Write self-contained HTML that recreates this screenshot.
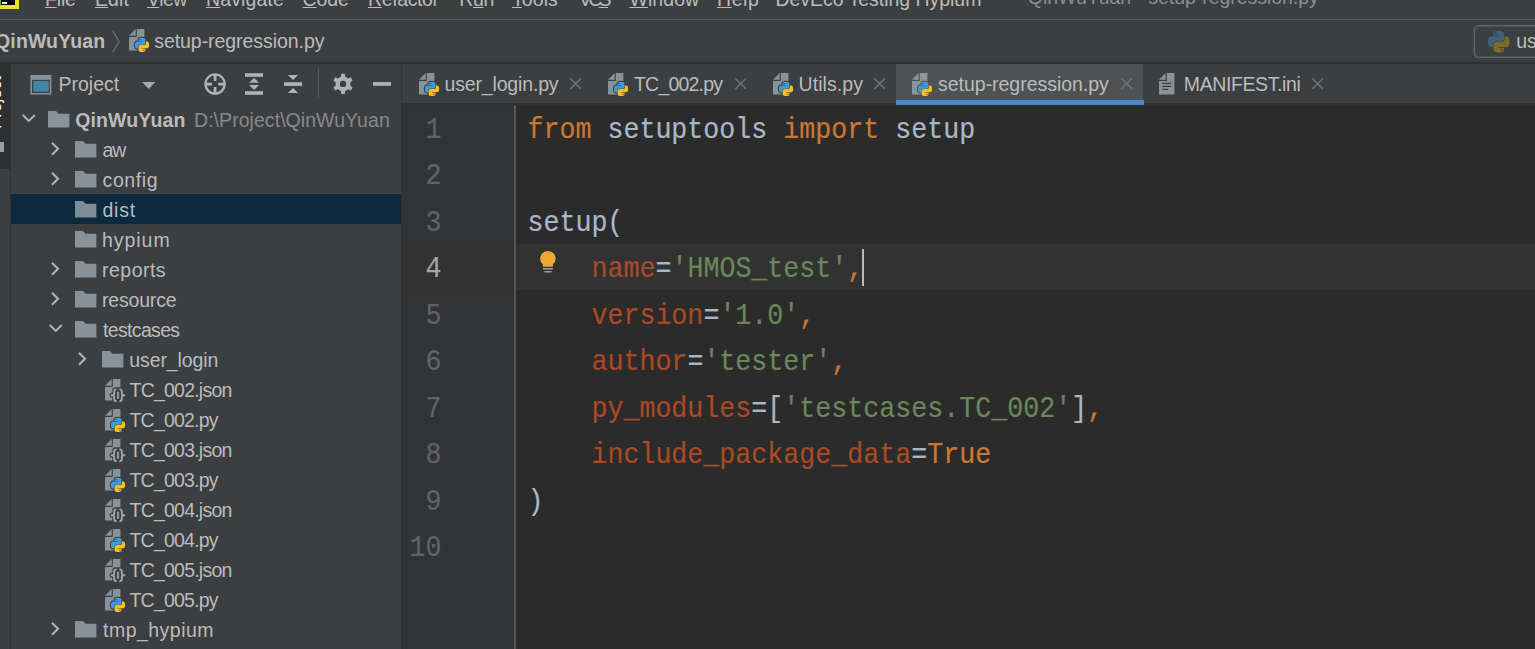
<!DOCTYPE html>
<html><head><meta charset="utf-8"><title>IDE</title><style>
html,body{margin:0;padding:0;background:#3c3f41;}
html{overflow:hidden;width:1535px;height:649px;}
body{width:1535px;height:649px;overflow:hidden;position:relative;font-family:"Liberation Sans",sans-serif;}
.t{position:absolute;white-space:pre;font-family:"Liberation Sans",sans-serif;font-size:19.5px;line-height:normal;}
.u{text-decoration:underline;text-decoration-thickness:1px;text-underline-offset:1px;}
.code{position:absolute;left:527.4px;white-space:pre;font-family:"Liberation Mono",monospace;font-size:26.67px;line-height:46.33px;height:46.33px;transform:scaleY(1.08);transform-origin:0 30.27px;-webkit-text-stroke:0.2px;}
.ln{position:absolute;left:402px;width:39.6px;text-align:right;white-space:pre;font-family:"Liberation Mono",monospace;font-size:26.67px;line-height:46.33px;height:46.33px;transform:scaleY(1.10);transform-origin:0 30.27px;-webkit-text-stroke:0.2px;}
</style></head><body>
<div style="position:absolute;left:0;top:0;width:1535px;height:649px;overflow:hidden">
<div style="position:absolute;left:0;top:0;width:1535px;height:649px;background:#3c3f41"></div>
<div style="position:absolute;left:0;top:19px;width:1535px;height:1px;background:#555759"></div>
<div style="position:absolute;left:0;top:62px;width:1535px;height:2px;background:#2d2f30"></div>
<div style="position:absolute;left:-3px;top:-10px;width:14px;height:11px;background:#050a02;border:4px solid #e9e733;border-left-color:#63ab21;border-bottom-color:#f0e22f;box-sizing:content-box"></div>
<div style="position:absolute;left:2px;top:2px;width:5.4px;height:1.9px;background:#e4e4e4"></div>
<div style="position:absolute;left:0;top:64px;width:10px;height:105px;background:#2d2f30"></div>
<div style="position:absolute;left:10px;top:64px;width:1px;height:585px;background:#2f3133"></div>
<div style="position:absolute;left:0;top:142px;width:4px;height:10px;background:#9a9da0"></div>
<div style="position:absolute;left:-14.3px;top:64px;width:24.3px;height:76px;overflow:hidden"><div style="position:absolute;left:0;top:64.5px;transform-origin:0 0;transform:rotate(-90deg);font:17px 'Liberation Sans',sans-serif;color:#ffffff;white-space:pre">Project</div></div>
<div style="position:absolute;left:401px;top:64px;width:1px;height:585px;background:#323232"></div>
<div style="position:absolute;left:402px;top:64px;width:1133px;height:39px;background:#3c3f41"></div>
<div style="position:absolute;left:402px;top:103px;width:1133px;height:2px;background:#313131"></div>
<div style="position:absolute;left:896px;top:64px;width:247.3px;height:39px;background:#4e5254"></div>
<div style="position:absolute;left:896px;top:100px;width:248px;height:5px;background:#4a88c7"></div>
<div style="position:absolute;left:402px;top:105px;width:1133px;height:544px;background:#2b2b2b"></div>
<div style="position:absolute;left:402px;top:105px;width:113px;height:544px;background:#313335"></div>
<div style="position:absolute;left:896px;top:100px;width:248px;height:5px;background:#4a88c7"></div>
<div style="position:absolute;left:514px;top:105px;width:2px;height:544px;background:#555555"></div>
<div style="position:absolute;left:402px;top:244px;width:112px;height:46px;background:#323232"></div>
<div style="position:absolute;left:516px;top:244px;width:1019px;height:46px;background:#323232"></div>
<div style="position:absolute;left:862px;top:249px;width:2px;height:37px;background:#bbbbbb"></div>
<div style="position:absolute;left:11px;top:194px;width:390px;height:30px;background:#0d293e"></div>
<svg style="position:absolute;left:112px;top:30px;overflow:visible" width="8" height="23" viewBox="0 0 8 23"><path d="M0.6 0.5 L7 11.5 L0.6 22.5" fill="none" stroke="#717476" stroke-width="1.2"/></svg>
<svg style="position:absolute;left:129.2px;top:29.0px;overflow:visible" width="24" height="24" viewBox="0 0 24 24"><path fill="#9AA7B0" fill-opacity=".8" d="M6.7 0 L0 6.7 H6.7z"/><path fill="#9AA7B0" fill-opacity=".8" d="M7.8 0 H15.4 V21.4 H0 V7.9 H7.8z"/><g transform="translate(5.9 8.8) scale(0.5916666666666667)" opacity="1"><path fill="#3c3f41" stroke="#3c3f41" stroke-width="3.38" stroke-linejoin="round" paint-order="stroke" d="M14.25.18l.9.2.73.26.59.3.45.32.34.34.25.34.16.33.1.3.04.26.02.2-.01.13V8.5l-.05.63-.13.55-.21.46-.26.38-.3.31-.33.25-.35.19-.35.14-.33.1-.3.07-.26.04-.21.02H8.77l-.69.05-.59.14-.5.22-.41.27-.33.32-.27.35-.2.36-.15.37-.1.35-.07.32-.04.27-.02.21v3.06H3.17l-.21-.03-.28-.07-.32-.12-.35-.18-.36-.26-.36-.36-.35-.46-.32-.59-.28-.73-.21-.88-.14-1.05-.05-1.23.06-1.22.16-1.04.24-.87.32-.71.36-.57.4-.44.42-.33.42-.24.4-.16.36-.1.32-.05.24-.01h.16l.06.01h8.16v-.83H6.18l-.01-2.75-.02-.37.05-.34.11-.31.17-.28.25-.26.31-.23.38-.2.44-.18.51-.15.58-.12.64-.1.71-.06.77-.04.84-.02 1.27.05zM7.95 2.16l-.23.33-.08.41.08.41.23.34.33.22.41.09.41-.09.33-.22.23-.34.08-.41-.08-.41-.23-.33-.33-.22-.41-.09-.41.09z"/><path fill="#3c3f41" stroke="#3c3f41" stroke-width="3.38" stroke-linejoin="round" paint-order="stroke" d="M21.04 6.11l.28.06.32.12.35.18.36.27.36.35.35.47.32.59.28.73.21.88.14 1.04.05 1.23-.06 1.23-.16 1.04-.24.86-.32.71-.36.57-.4.45-.42.33-.42.24-.4.16-.36.09-.32.05-.24.02-.16-.01h-8.22v.82h5.84l.01 2.76.02.36-.05.34-.11.31-.17.29-.25.25-.31.24-.38.2-.44.17-.51.15-.58.13-.64.09-.71.07-.77.04-.84.01-1.27-.04-1.07-.14-.9-.2-.73-.25-.59-.3-.45-.33-.34-.34-.25-.34-.16-.33-.1-.3-.04-.25-.02-.2.01-.13v-5.34l.05-.64.13-.54.21-.46.26-.38.3-.32.33-.24.35-.2.35-.14.33-.1.3-.06.26-.04.21-.02.13-.01h5.84l.69-.05.59-.14.5-.21.41-.28.33-.32.27-.35.2-.36.15-.36.1-.35.07-.32.04-.28.02-.21V6.07h2.09l.14.01zM14.57 20.36l-.23.33-.08.41.08.41.23.33.33.23.41.08.41-.08.33-.23.23-.33.08-.41-.08-.41-.23-.33-.33-.23-.41-.08-.41.08z"/><path fill="#3d9bd5" fill-rule="evenodd" d="M14.25.18l.9.2.73.26.59.3.45.32.34.34.25.34.16.33.1.3.04.26.02.2-.01.13V8.5l-.05.63-.13.55-.21.46-.26.38-.3.31-.33.25-.35.19-.35.14-.33.1-.3.07-.26.04-.21.02H8.77l-.69.05-.59.14-.5.22-.41.27-.33.32-.27.35-.2.36-.15.37-.1.35-.07.32-.04.27-.02.21v3.06H3.17l-.21-.03-.28-.07-.32-.12-.35-.18-.36-.26-.36-.36-.35-.46-.32-.59-.28-.73-.21-.88-.14-1.05-.05-1.23.06-1.22.16-1.04.24-.87.32-.71.36-.57.4-.44.42-.33.42-.24.4-.16.36-.1.32-.05.24-.01h.16l.06.01h8.16v-.83H6.18l-.01-2.75-.02-.37.05-.34.11-.31.17-.28.25-.26.31-.23.38-.2.44-.18.51-.15.58-.12.64-.1.71-.06.77-.04.84-.02 1.27.05zM7.95 2.16l-.23.33-.08.41.08.41.23.34.33.22.41.09.41-.09.33-.22.23-.34.08-.41-.08-.41-.23-.33-.33-.22-.41-.09-.41.09z"/><path fill="#f5c211" fill-rule="evenodd" d="M21.04 6.11l.28.06.32.12.35.18.36.27.36.35.35.47.32.59.28.73.21.88.14 1.04.05 1.23-.06 1.23-.16 1.04-.24.86-.32.71-.36.57-.4.45-.42.33-.42.24-.4.16-.36.09-.32.05-.24.02-.16-.01h-8.22v.82h5.84l.01 2.76.02.36-.05.34-.11.31-.17.29-.25.25-.31.24-.38.2-.44.17-.51.15-.58.13-.64.09-.71.07-.77.04-.84.01-1.27-.04-1.07-.14-.9-.2-.73-.25-.59-.3-.45-.33-.34-.34-.25-.34-.16-.33-.1-.3-.04-.25-.02-.2.01-.13v-5.34l.05-.64.13-.54.21-.46.26-.38.3-.32.33-.24.35-.2.35-.14.33-.1.3-.06.26-.04.21-.02.13-.01h5.84l.69-.05.59-.14.5-.21.41-.28.33-.32.27-.35.2-.36.15-.36.1-.35.07-.32.04-.28.02-.21V6.07h2.09l.14.01zM14.57 20.36l-.23.33-.08.41.08.41.23.33.33.23.41.08.41-.08.33-.23.23-.33.08-.41-.08-.41-.23-.33-.33-.23-.41-.08-.41.08z"/></g></svg>
<svg style="position:absolute;left:1470px;top:20px;overflow:visible" width="70" height="42" viewBox="0 0 70 42"><rect x="4.4" y="5.7" width="80" height="31.5" rx="4.5" fill="none" stroke="#606365" stroke-width="1.5"/></svg>
<svg style="position:absolute;left:1488px;top:31px;overflow:visible" width="22" height="22" viewBox="0 0 22 22"><g transform="translate(0 0) scale(0.8958333333333334)" opacity="1"><path fill="#3d6279" fill-rule="evenodd" d="M14.25.18l.9.2.73.26.59.3.45.32.34.34.25.34.16.33.1.3.04.26.02.2-.01.13V8.5l-.05.63-.13.55-.21.46-.26.38-.3.31-.33.25-.35.19-.35.14-.33.1-.3.07-.26.04-.21.02H8.77l-.69.05-.59.14-.5.22-.41.27-.33.32-.27.35-.2.36-.15.37-.1.35-.07.32-.04.27-.02.21v3.06H3.17l-.21-.03-.28-.07-.32-.12-.35-.18-.36-.26-.36-.36-.35-.46-.32-.59-.28-.73-.21-.88-.14-1.05-.05-1.23.06-1.22.16-1.04.24-.87.32-.71.36-.57.4-.44.42-.33.42-.24.4-.16.36-.1.32-.05.24-.01h.16l.06.01h8.16v-.83H6.18l-.01-2.75-.02-.37.05-.34.11-.31.17-.28.25-.26.31-.23.38-.2.44-.18.51-.15.58-.12.64-.1.71-.06.77-.04.84-.02 1.27.05zM7.95 2.16l-.23.33-.08.41.08.41.23.34.33.22.41.09.41-.09.33-.22.23-.34.08-.41-.08-.41-.23-.33-.33-.22-.41-.09-.41.09z"/><path fill="#7f6b28" fill-rule="evenodd" d="M21.04 6.11l.28.06.32.12.35.18.36.27.36.35.35.47.32.59.28.73.21.88.14 1.04.05 1.23-.06 1.23-.16 1.04-.24.86-.32.71-.36.57-.4.45-.42.33-.42.24-.4.16-.36.09-.32.05-.24.02-.16-.01h-8.22v.82h5.84l.01 2.76.02.36-.05.34-.11.31-.17.29-.25.25-.31.24-.38.2-.44.17-.51.15-.58.13-.64.09-.71.07-.77.04-.84.01-1.27-.04-1.07-.14-.9-.2-.73-.25-.59-.3-.45-.33-.34-.34-.25-.34-.16-.33-.1-.3-.04-.25-.02-.2.01-.13v-5.34l.05-.64.13-.54.21-.46.26-.38.3-.32.33-.24.35-.2.35-.14.33-.1.3-.06.26-.04.21-.02.13-.01h5.84l.69-.05.59-.14.5-.21.41-.28.33-.32.27-.35.2-.36.15-.36.1-.35.07-.32.04-.28.02-.21V6.07h2.09l.14.01zM14.57 20.36l-.23.33-.08.41.08.41.23.33.33.23.41.08.41-.08.33-.23.23-.33.08-.41-.08-.41-.23-.33-.33-.23-.41-.08-.41.08z"/></g></svg>
<svg style="position:absolute;left:30px;top:75px;overflow:visible" width="22" height="20" viewBox="0 0 22 20"><path fill="#9AA7B0" fill-opacity=".8" fill-rule="evenodd" d="M0.4 0 H21.4 V19.6 H0.4z M2 4.8 V18 H19.8 V4.8z"/><rect x="3.3" y="5.9" width="15.4" height="10.8" fill="#3e88a8"/></svg>
<svg style="position:absolute;left:142px;top:82px;overflow:visible" width="14" height="8" viewBox="0 0 14 8"><path d="M0 0 H13.4 L6.7 7z" fill="#a6a9ab"/></svg>
<svg style="position:absolute;left:0;top:0" width="1535" height="649" viewBox="0 0 1535 649"><g fill="none" stroke="#afb1b3"><circle cx="215.1" cy="84.05" r="9.6" stroke-width="2.3"/><path stroke-width="2.8" d="M215.1 74.5 V81 M215.1 87.1 V93.6 M205.5 84.05 H212 M218.2 84.05 H224.7"/></g><g fill="#afb1b3"><rect x="245" y="73.2" width="18" height="3.6"/><rect x="245" y="91.2" width="18" height="3.6"/><path d="M249 82.8 H259.1 L254.05 78z"/><path d="M249 85.1 H259.1 L254.05 90z"/><rect x="284" y="82.2" width="18.1" height="3.7"/><path d="M287.9 75 H298.2 L293.05 80z"/><path d="M287.9 93 H298.2 L293.05 87.9z"/><path fill-rule="evenodd" d="M340.85 76.82 L341.25 73.85 L344.75 73.85 L345.15 76.82 A7.4 7.4 0 0 1 348.06 78.50 L350.83 77.36 L352.58 80.39 L350.21 82.22 A7.4 7.4 0 0 1 350.21 85.58 L352.58 87.41 L350.83 90.44 L348.06 89.30 A7.4 7.4 0 0 1 345.15 90.98 L344.75 93.95 L341.25 93.95 L340.85 90.98 A7.4 7.4 0 0 1 337.94 89.30 L335.17 90.44 L333.42 87.41 L335.79 85.58 A7.4 7.4 0 0 1 335.79 82.22 L333.42 80.39 L335.17 77.36 L337.94 78.50 A7.4 7.4 0 0 1 340.85 76.82z M339.8 83.9 a3.2 3.2 0 1 0 6.4 0 a3.2 3.2 0 1 0 -6.4 0z"/><rect x="373" y="82.1" width="18" height="3.7"/></g></svg>
<div style="position:absolute;left:318px;top:68px;width:1px;height:30px;background:#55585a"></div>
<svg style="position:absolute;left:419.2px;top:73px;overflow:visible" width="24" height="24" viewBox="0 0 24 24"><path fill="#9AA7B0" fill-opacity=".8" d="M6.7 0 L0 6.7 H6.7z"/><path fill="#9AA7B0" fill-opacity=".8" d="M7.8 0 H15.4 V21.4 H0 V7.9 H7.8z"/><g transform="translate(5.9 8.8) scale(0.5916666666666667)" opacity="1"><path fill="#3c3f41" stroke="#3c3f41" stroke-width="3.38" stroke-linejoin="round" paint-order="stroke" d="M14.25.18l.9.2.73.26.59.3.45.32.34.34.25.34.16.33.1.3.04.26.02.2-.01.13V8.5l-.05.63-.13.55-.21.46-.26.38-.3.31-.33.25-.35.19-.35.14-.33.1-.3.07-.26.04-.21.02H8.77l-.69.05-.59.14-.5.22-.41.27-.33.32-.27.35-.2.36-.15.37-.1.35-.07.32-.04.27-.02.21v3.06H3.17l-.21-.03-.28-.07-.32-.12-.35-.18-.36-.26-.36-.36-.35-.46-.32-.59-.28-.73-.21-.88-.14-1.05-.05-1.23.06-1.22.16-1.04.24-.87.32-.71.36-.57.4-.44.42-.33.42-.24.4-.16.36-.1.32-.05.24-.01h.16l.06.01h8.16v-.83H6.18l-.01-2.75-.02-.37.05-.34.11-.31.17-.28.25-.26.31-.23.38-.2.44-.18.51-.15.58-.12.64-.1.71-.06.77-.04.84-.02 1.27.05zM7.95 2.16l-.23.33-.08.41.08.41.23.34.33.22.41.09.41-.09.33-.22.23-.34.08-.41-.08-.41-.23-.33-.33-.22-.41-.09-.41.09z"/><path fill="#3c3f41" stroke="#3c3f41" stroke-width="3.38" stroke-linejoin="round" paint-order="stroke" d="M21.04 6.11l.28.06.32.12.35.18.36.27.36.35.35.47.32.59.28.73.21.88.14 1.04.05 1.23-.06 1.23-.16 1.04-.24.86-.32.71-.36.57-.4.45-.42.33-.42.24-.4.16-.36.09-.32.05-.24.02-.16-.01h-8.22v.82h5.84l.01 2.76.02.36-.05.34-.11.31-.17.29-.25.25-.31.24-.38.2-.44.17-.51.15-.58.13-.64.09-.71.07-.77.04-.84.01-1.27-.04-1.07-.14-.9-.2-.73-.25-.59-.3-.45-.33-.34-.34-.25-.34-.16-.33-.1-.3-.04-.25-.02-.2.01-.13v-5.34l.05-.64.13-.54.21-.46.26-.38.3-.32.33-.24.35-.2.35-.14.33-.1.3-.06.26-.04.21-.02.13-.01h5.84l.69-.05.59-.14.5-.21.41-.28.33-.32.27-.35.2-.36.15-.36.1-.35.07-.32.04-.28.02-.21V6.07h2.09l.14.01zM14.57 20.36l-.23.33-.08.41.08.41.23.33.33.23.41.08.41-.08.33-.23.23-.33.08-.41-.08-.41-.23-.33-.33-.23-.41-.08-.41.08z"/><path fill="#3d9bd5" fill-rule="evenodd" d="M14.25.18l.9.2.73.26.59.3.45.32.34.34.25.34.16.33.1.3.04.26.02.2-.01.13V8.5l-.05.63-.13.55-.21.46-.26.38-.3.31-.33.25-.35.19-.35.14-.33.1-.3.07-.26.04-.21.02H8.77l-.69.05-.59.14-.5.22-.41.27-.33.32-.27.35-.2.36-.15.37-.1.35-.07.32-.04.27-.02.21v3.06H3.17l-.21-.03-.28-.07-.32-.12-.35-.18-.36-.26-.36-.36-.35-.46-.32-.59-.28-.73-.21-.88-.14-1.05-.05-1.23.06-1.22.16-1.04.24-.87.32-.71.36-.57.4-.44.42-.33.42-.24.4-.16.36-.1.32-.05.24-.01h.16l.06.01h8.16v-.83H6.18l-.01-2.75-.02-.37.05-.34.11-.31.17-.28.25-.26.31-.23.38-.2.44-.18.51-.15.58-.12.64-.1.71-.06.77-.04.84-.02 1.27.05zM7.95 2.16l-.23.33-.08.41.08.41.23.34.33.22.41.09.41-.09.33-.22.23-.34.08-.41-.08-.41-.23-.33-.33-.22-.41-.09-.41.09z"/><path fill="#f5c211" fill-rule="evenodd" d="M21.04 6.11l.28.06.32.12.35.18.36.27.36.35.35.47.32.59.28.73.21.88.14 1.04.05 1.23-.06 1.23-.16 1.04-.24.86-.32.71-.36.57-.4.45-.42.33-.42.24-.4.16-.36.09-.32.05-.24.02-.16-.01h-8.22v.82h5.84l.01 2.76.02.36-.05.34-.11.31-.17.29-.25.25-.31.24-.38.2-.44.17-.51.15-.58.13-.64.09-.71.07-.77.04-.84.01-1.27-.04-1.07-.14-.9-.2-.73-.25-.59-.3-.45-.33-.34-.34-.25-.34-.16-.33-.1-.3-.04-.25-.02-.2.01-.13v-5.34l.05-.64.13-.54.21-.46.26-.38.3-.32.33-.24.35-.2.35-.14.33-.1.3-.06.26-.04.21-.02.13-.01h5.84l.69-.05.59-.14.5-.21.41-.28.33-.32.27-.35.2-.36.15-.36.1-.35.07-.32.04-.28.02-.21V6.07h2.09l.14.01zM14.57 20.36l-.23.33-.08.41.08.41.23.33.33.23.41.08.41-.08.33-.23.23-.33.08-.41-.08-.41-.23-.33-.33-.23-.41-.08-.41.08z"/></g></svg>
<svg style="position:absolute;left:569.5px;top:78.3px;overflow:visible" width="12" height="12" viewBox="0 0 12 12"><path d="M0.5 0.5 L10.9 10.9 M10.9 0.5 L0.5 10.9" fill="none" stroke="#6e7173" stroke-width="1.5"/></svg>
<svg style="position:absolute;left:608px;top:73px;overflow:visible" width="24" height="24" viewBox="0 0 24 24"><path fill="#9AA7B0" fill-opacity=".8" d="M6.7 0 L0 6.7 H6.7z"/><path fill="#9AA7B0" fill-opacity=".8" d="M7.8 0 H15.4 V21.4 H0 V7.9 H7.8z"/><g transform="translate(5.9 8.8) scale(0.5916666666666667)" opacity="1"><path fill="#3c3f41" stroke="#3c3f41" stroke-width="3.38" stroke-linejoin="round" paint-order="stroke" d="M14.25.18l.9.2.73.26.59.3.45.32.34.34.25.34.16.33.1.3.04.26.02.2-.01.13V8.5l-.05.63-.13.55-.21.46-.26.38-.3.31-.33.25-.35.19-.35.14-.33.1-.3.07-.26.04-.21.02H8.77l-.69.05-.59.14-.5.22-.41.27-.33.32-.27.35-.2.36-.15.37-.1.35-.07.32-.04.27-.02.21v3.06H3.17l-.21-.03-.28-.07-.32-.12-.35-.18-.36-.26-.36-.36-.35-.46-.32-.59-.28-.73-.21-.88-.14-1.05-.05-1.23.06-1.22.16-1.04.24-.87.32-.71.36-.57.4-.44.42-.33.42-.24.4-.16.36-.1.32-.05.24-.01h.16l.06.01h8.16v-.83H6.18l-.01-2.75-.02-.37.05-.34.11-.31.17-.28.25-.26.31-.23.38-.2.44-.18.51-.15.58-.12.64-.1.71-.06.77-.04.84-.02 1.27.05zM7.95 2.16l-.23.33-.08.41.08.41.23.34.33.22.41.09.41-.09.33-.22.23-.34.08-.41-.08-.41-.23-.33-.33-.22-.41-.09-.41.09z"/><path fill="#3c3f41" stroke="#3c3f41" stroke-width="3.38" stroke-linejoin="round" paint-order="stroke" d="M21.04 6.11l.28.06.32.12.35.18.36.27.36.35.35.47.32.59.28.73.21.88.14 1.04.05 1.23-.06 1.23-.16 1.04-.24.86-.32.71-.36.57-.4.45-.42.33-.42.24-.4.16-.36.09-.32.05-.24.02-.16-.01h-8.22v.82h5.84l.01 2.76.02.36-.05.34-.11.31-.17.29-.25.25-.31.24-.38.2-.44.17-.51.15-.58.13-.64.09-.71.07-.77.04-.84.01-1.27-.04-1.07-.14-.9-.2-.73-.25-.59-.3-.45-.33-.34-.34-.25-.34-.16-.33-.1-.3-.04-.25-.02-.2.01-.13v-5.34l.05-.64.13-.54.21-.46.26-.38.3-.32.33-.24.35-.2.35-.14.33-.1.3-.06.26-.04.21-.02.13-.01h5.84l.69-.05.59-.14.5-.21.41-.28.33-.32.27-.35.2-.36.15-.36.1-.35.07-.32.04-.28.02-.21V6.07h2.09l.14.01zM14.57 20.36l-.23.33-.08.41.08.41.23.33.33.23.41.08.41-.08.33-.23.23-.33.08-.41-.08-.41-.23-.33-.33-.23-.41-.08-.41.08z"/><path fill="#3d9bd5" fill-rule="evenodd" d="M14.25.18l.9.2.73.26.59.3.45.32.34.34.25.34.16.33.1.3.04.26.02.2-.01.13V8.5l-.05.63-.13.55-.21.46-.26.38-.3.31-.33.25-.35.19-.35.14-.33.1-.3.07-.26.04-.21.02H8.77l-.69.05-.59.14-.5.22-.41.27-.33.32-.27.35-.2.36-.15.37-.1.35-.07.32-.04.27-.02.21v3.06H3.17l-.21-.03-.28-.07-.32-.12-.35-.18-.36-.26-.36-.36-.35-.46-.32-.59-.28-.73-.21-.88-.14-1.05-.05-1.23.06-1.22.16-1.04.24-.87.32-.71.36-.57.4-.44.42-.33.42-.24.4-.16.36-.1.32-.05.24-.01h.16l.06.01h8.16v-.83H6.18l-.01-2.75-.02-.37.05-.34.11-.31.17-.28.25-.26.31-.23.38-.2.44-.18.51-.15.58-.12.64-.1.71-.06.77-.04.84-.02 1.27.05zM7.95 2.16l-.23.33-.08.41.08.41.23.34.33.22.41.09.41-.09.33-.22.23-.34.08-.41-.08-.41-.23-.33-.33-.22-.41-.09-.41.09z"/><path fill="#f5c211" fill-rule="evenodd" d="M21.04 6.11l.28.06.32.12.35.18.36.27.36.35.35.47.32.59.28.73.21.88.14 1.04.05 1.23-.06 1.23-.16 1.04-.24.86-.32.71-.36.57-.4.45-.42.33-.42.24-.4.16-.36.09-.32.05-.24.02-.16-.01h-8.22v.82h5.84l.01 2.76.02.36-.05.34-.11.31-.17.29-.25.25-.31.24-.38.2-.44.17-.51.15-.58.13-.64.09-.71.07-.77.04-.84.01-1.27-.04-1.07-.14-.9-.2-.73-.25-.59-.3-.45-.33-.34-.34-.25-.34-.16-.33-.1-.3-.04-.25-.02-.2.01-.13v-5.34l.05-.64.13-.54.21-.46.26-.38.3-.32.33-.24.35-.2.35-.14.33-.1.3-.06.26-.04.21-.02.13-.01h5.84l.69-.05.59-.14.5-.21.41-.28.33-.32.27-.35.2-.36.15-.36.1-.35.07-.32.04-.28.02-.21V6.07h2.09l.14.01zM14.57 20.36l-.23.33-.08.41.08.41.23.33.33.23.41.08.41-.08.33-.23.23-.33.08-.41-.08-.41-.23-.33-.33-.23-.41-.08-.41.08z"/></g></svg>
<svg style="position:absolute;left:734.5px;top:78.3px;overflow:visible" width="12" height="12" viewBox="0 0 12 12"><path d="M0.5 0.5 L10.9 10.9 M10.9 0.5 L0.5 10.9" fill="none" stroke="#6e7173" stroke-width="1.5"/></svg>
<svg style="position:absolute;left:773.2px;top:73px;overflow:visible" width="24" height="24" viewBox="0 0 24 24"><path fill="#9AA7B0" fill-opacity=".8" d="M6.7 0 L0 6.7 H6.7z"/><path fill="#9AA7B0" fill-opacity=".8" d="M7.8 0 H15.4 V21.4 H0 V7.9 H7.8z"/><g transform="translate(5.9 8.8) scale(0.5916666666666667)" opacity="1"><path fill="#3c3f41" stroke="#3c3f41" stroke-width="3.38" stroke-linejoin="round" paint-order="stroke" d="M14.25.18l.9.2.73.26.59.3.45.32.34.34.25.34.16.33.1.3.04.26.02.2-.01.13V8.5l-.05.63-.13.55-.21.46-.26.38-.3.31-.33.25-.35.19-.35.14-.33.1-.3.07-.26.04-.21.02H8.77l-.69.05-.59.14-.5.22-.41.27-.33.32-.27.35-.2.36-.15.37-.1.35-.07.32-.04.27-.02.21v3.06H3.17l-.21-.03-.28-.07-.32-.12-.35-.18-.36-.26-.36-.36-.35-.46-.32-.59-.28-.73-.21-.88-.14-1.05-.05-1.23.06-1.22.16-1.04.24-.87.32-.71.36-.57.4-.44.42-.33.42-.24.4-.16.36-.1.32-.05.24-.01h.16l.06.01h8.16v-.83H6.18l-.01-2.75-.02-.37.05-.34.11-.31.17-.28.25-.26.31-.23.38-.2.44-.18.51-.15.58-.12.64-.1.71-.06.77-.04.84-.02 1.27.05zM7.95 2.16l-.23.33-.08.41.08.41.23.34.33.22.41.09.41-.09.33-.22.23-.34.08-.41-.08-.41-.23-.33-.33-.22-.41-.09-.41.09z"/><path fill="#3c3f41" stroke="#3c3f41" stroke-width="3.38" stroke-linejoin="round" paint-order="stroke" d="M21.04 6.11l.28.06.32.12.35.18.36.27.36.35.35.47.32.59.28.73.21.88.14 1.04.05 1.23-.06 1.23-.16 1.04-.24.86-.32.71-.36.57-.4.45-.42.33-.42.24-.4.16-.36.09-.32.05-.24.02-.16-.01h-8.22v.82h5.84l.01 2.76.02.36-.05.34-.11.31-.17.29-.25.25-.31.24-.38.2-.44.17-.51.15-.58.13-.64.09-.71.07-.77.04-.84.01-1.27-.04-1.07-.14-.9-.2-.73-.25-.59-.3-.45-.33-.34-.34-.25-.34-.16-.33-.1-.3-.04-.25-.02-.2.01-.13v-5.34l.05-.64.13-.54.21-.46.26-.38.3-.32.33-.24.35-.2.35-.14.33-.1.3-.06.26-.04.21-.02.13-.01h5.84l.69-.05.59-.14.5-.21.41-.28.33-.32.27-.35.2-.36.15-.36.1-.35.07-.32.04-.28.02-.21V6.07h2.09l.14.01zM14.57 20.36l-.23.33-.08.41.08.41.23.33.33.23.41.08.41-.08.33-.23.23-.33.08-.41-.08-.41-.23-.33-.33-.23-.41-.08-.41.08z"/><path fill="#3d9bd5" fill-rule="evenodd" d="M14.25.18l.9.2.73.26.59.3.45.32.34.34.25.34.16.33.1.3.04.26.02.2-.01.13V8.5l-.05.63-.13.55-.21.46-.26.38-.3.31-.33.25-.35.19-.35.14-.33.1-.3.07-.26.04-.21.02H8.77l-.69.05-.59.14-.5.22-.41.27-.33.32-.27.35-.2.36-.15.37-.1.35-.07.32-.04.27-.02.21v3.06H3.17l-.21-.03-.28-.07-.32-.12-.35-.18-.36-.26-.36-.36-.35-.46-.32-.59-.28-.73-.21-.88-.14-1.05-.05-1.23.06-1.22.16-1.04.24-.87.32-.71.36-.57.4-.44.42-.33.42-.24.4-.16.36-.1.32-.05.24-.01h.16l.06.01h8.16v-.83H6.18l-.01-2.75-.02-.37.05-.34.11-.31.17-.28.25-.26.31-.23.38-.2.44-.18.51-.15.58-.12.64-.1.71-.06.77-.04.84-.02 1.27.05zM7.95 2.16l-.23.33-.08.41.08.41.23.34.33.22.41.09.41-.09.33-.22.23-.34.08-.41-.08-.41-.23-.33-.33-.22-.41-.09-.41.09z"/><path fill="#f5c211" fill-rule="evenodd" d="M21.04 6.11l.28.06.32.12.35.18.36.27.36.35.35.47.32.59.28.73.21.88.14 1.04.05 1.23-.06 1.23-.16 1.04-.24.86-.32.71-.36.57-.4.45-.42.33-.42.24-.4.16-.36.09-.32.05-.24.02-.16-.01h-8.22v.82h5.84l.01 2.76.02.36-.05.34-.11.31-.17.29-.25.25-.31.24-.38.2-.44.17-.51.15-.58.13-.64.09-.71.07-.77.04-.84.01-1.27-.04-1.07-.14-.9-.2-.73-.25-.59-.3-.45-.33-.34-.34-.25-.34-.16-.33-.1-.3-.04-.25-.02-.2.01-.13v-5.34l.05-.64.13-.54.21-.46.26-.38.3-.32.33-.24.35-.2.35-.14.33-.1.3-.06.26-.04.21-.02.13-.01h5.84l.69-.05.59-.14.5-.21.41-.28.33-.32.27-.35.2-.36.15-.36.1-.35.07-.32.04-.28.02-.21V6.07h2.09l.14.01zM14.57 20.36l-.23.33-.08.41.08.41.23.33.33.23.41.08.41-.08.33-.23.23-.33.08-.41-.08-.41-.23-.33-.33-.23-.41-.08-.41.08z"/></g></svg>
<svg style="position:absolute;left:874.4px;top:78.3px;overflow:visible" width="12" height="12" viewBox="0 0 12 12"><path d="M0.5 0.5 L10.9 10.9 M10.9 0.5 L0.5 10.9" fill="none" stroke="#6e7173" stroke-width="1.5"/></svg>
<svg style="position:absolute;left:912.2px;top:73px;overflow:visible" width="24" height="24" viewBox="0 0 24 24"><path fill="#9AA7B0" fill-opacity=".8" d="M6.7 0 L0 6.7 H6.7z"/><path fill="#9AA7B0" fill-opacity=".8" d="M7.8 0 H15.4 V21.4 H0 V7.9 H7.8z"/><g transform="translate(5.9 8.8) scale(0.5916666666666667)" opacity="1"><path fill="#4e5254" stroke="#4e5254" stroke-width="3.38" stroke-linejoin="round" paint-order="stroke" d="M14.25.18l.9.2.73.26.59.3.45.32.34.34.25.34.16.33.1.3.04.26.02.2-.01.13V8.5l-.05.63-.13.55-.21.46-.26.38-.3.31-.33.25-.35.19-.35.14-.33.1-.3.07-.26.04-.21.02H8.77l-.69.05-.59.14-.5.22-.41.27-.33.32-.27.35-.2.36-.15.37-.1.35-.07.32-.04.27-.02.21v3.06H3.17l-.21-.03-.28-.07-.32-.12-.35-.18-.36-.26-.36-.36-.35-.46-.32-.59-.28-.73-.21-.88-.14-1.05-.05-1.23.06-1.22.16-1.04.24-.87.32-.71.36-.57.4-.44.42-.33.42-.24.4-.16.36-.1.32-.05.24-.01h.16l.06.01h8.16v-.83H6.18l-.01-2.75-.02-.37.05-.34.11-.31.17-.28.25-.26.31-.23.38-.2.44-.18.51-.15.58-.12.64-.1.71-.06.77-.04.84-.02 1.27.05zM7.95 2.16l-.23.33-.08.41.08.41.23.34.33.22.41.09.41-.09.33-.22.23-.34.08-.41-.08-.41-.23-.33-.33-.22-.41-.09-.41.09z"/><path fill="#4e5254" stroke="#4e5254" stroke-width="3.38" stroke-linejoin="round" paint-order="stroke" d="M21.04 6.11l.28.06.32.12.35.18.36.27.36.35.35.47.32.59.28.73.21.88.14 1.04.05 1.23-.06 1.23-.16 1.04-.24.86-.32.71-.36.57-.4.45-.42.33-.42.24-.4.16-.36.09-.32.05-.24.02-.16-.01h-8.22v.82h5.84l.01 2.76.02.36-.05.34-.11.31-.17.29-.25.25-.31.24-.38.2-.44.17-.51.15-.58.13-.64.09-.71.07-.77.04-.84.01-1.27-.04-1.07-.14-.9-.2-.73-.25-.59-.3-.45-.33-.34-.34-.25-.34-.16-.33-.1-.3-.04-.25-.02-.2.01-.13v-5.34l.05-.64.13-.54.21-.46.26-.38.3-.32.33-.24.35-.2.35-.14.33-.1.3-.06.26-.04.21-.02.13-.01h5.84l.69-.05.59-.14.5-.21.41-.28.33-.32.27-.35.2-.36.15-.36.1-.35.07-.32.04-.28.02-.21V6.07h2.09l.14.01zM14.57 20.36l-.23.33-.08.41.08.41.23.33.33.23.41.08.41-.08.33-.23.23-.33.08-.41-.08-.41-.23-.33-.33-.23-.41-.08-.41.08z"/><path fill="#3d9bd5" fill-rule="evenodd" d="M14.25.18l.9.2.73.26.59.3.45.32.34.34.25.34.16.33.1.3.04.26.02.2-.01.13V8.5l-.05.63-.13.55-.21.46-.26.38-.3.31-.33.25-.35.19-.35.14-.33.1-.3.07-.26.04-.21.02H8.77l-.69.05-.59.14-.5.22-.41.27-.33.32-.27.35-.2.36-.15.37-.1.35-.07.32-.04.27-.02.21v3.06H3.17l-.21-.03-.28-.07-.32-.12-.35-.18-.36-.26-.36-.36-.35-.46-.32-.59-.28-.73-.21-.88-.14-1.05-.05-1.23.06-1.22.16-1.04.24-.87.32-.71.36-.57.4-.44.42-.33.42-.24.4-.16.36-.1.32-.05.24-.01h.16l.06.01h8.16v-.83H6.18l-.01-2.75-.02-.37.05-.34.11-.31.17-.28.25-.26.31-.23.38-.2.44-.18.51-.15.58-.12.64-.1.71-.06.77-.04.84-.02 1.27.05zM7.95 2.16l-.23.33-.08.41.08.41.23.34.33.22.41.09.41-.09.33-.22.23-.34.08-.41-.08-.41-.23-.33-.33-.22-.41-.09-.41.09z"/><path fill="#f5c211" fill-rule="evenodd" d="M21.04 6.11l.28.06.32.12.35.18.36.27.36.35.35.47.32.59.28.73.21.88.14 1.04.05 1.23-.06 1.23-.16 1.04-.24.86-.32.71-.36.57-.4.45-.42.33-.42.24-.4.16-.36.09-.32.05-.24.02-.16-.01h-8.22v.82h5.84l.01 2.76.02.36-.05.34-.11.31-.17.29-.25.25-.31.24-.38.2-.44.17-.51.15-.58.13-.64.09-.71.07-.77.04-.84.01-1.27-.04-1.07-.14-.9-.2-.73-.25-.59-.3-.45-.33-.34-.34-.25-.34-.16-.33-.1-.3-.04-.25-.02-.2.01-.13v-5.34l.05-.64.13-.54.21-.46.26-.38.3-.32.33-.24.35-.2.35-.14.33-.1.3-.06.26-.04.21-.02.13-.01h5.84l.69-.05.59-.14.5-.21.41-.28.33-.32.27-.35.2-.36.15-.36.1-.35.07-.32.04-.28.02-.21V6.07h2.09l.14.01zM14.57 20.36l-.23.33-.08.41.08.41.23.33.33.23.41.08.41-.08.33-.23.23-.33.08-.41-.08-.41-.23-.33-.33-.23-.41-.08-.41.08z"/></g></svg>
<svg style="position:absolute;left:1120.5px;top:78.3px;overflow:visible" width="12" height="12" viewBox="0 0 12 12"><path d="M0.5 0.5 L10.9 10.9 M10.9 0.5 L0.5 10.9" fill="none" stroke="#6e7173" stroke-width="1.5"/></svg>
<svg style="position:absolute;left:1158.7px;top:73px;overflow:visible" width="24" height="24" viewBox="0 0 24 24"><path fill="#9AA7B0" fill-opacity=".8" d="M6.7 0 L0 6.7 H6.7z"/><path fill="#9AA7B0" fill-opacity=".8" fill-rule="evenodd" d="M7.8 0 H15.4 V21.4 H0 V7.9 H7.8z M3.3 9.7 V11 H12.2 V9.7z M3.3 12.7 V14 H12.2 V12.7z M3.3 15.7 V17 H9.3 V15.7z"/></svg>
<svg style="position:absolute;left:1312.2px;top:78.3px;overflow:visible" width="12" height="12" viewBox="0 0 12 12"><path d="M0.5 0.5 L10.9 10.9 M10.9 0.5 L0.5 10.9" fill="none" stroke="#6e7173" stroke-width="1.5"/></svg>
<svg style="position:absolute;left:48.1px;top:110.9px;overflow:visible" width="24" height="24" viewBox="0 0 24 24"><path fill="#9AA7B0" fill-opacity=".8" d="M0 0 H7.3 Q8 0 8.5 .5 L10.6 2.7 H21.4 V16.6 H0z"/></svg>
<svg style="position:absolute;left:21.5px;top:113.6px;overflow:visible" width="14" height="10" viewBox="0 0 14 10"><path d="M0.8 1 L6.8 7 L12.8 1" fill="none" stroke="#b2b4b6" stroke-width="1.9"/></svg>
<svg style="position:absolute;left:75.1px;top:140.9px;overflow:visible" width="24" height="24" viewBox="0 0 24 24"><path fill="#9AA7B0" fill-opacity=".8" d="M0 0 H7.3 Q8 0 8.5 .5 L10.6 2.7 H21.4 V16.6 H0z"/></svg>
<svg style="position:absolute;left:50.89999999999999px;top:142.3px;overflow:visible" width="10" height="14" viewBox="0 0 10 14"><path d="M1 0.8 L7 6.8 L1 12.8" fill="none" stroke="#b2b4b6" stroke-width="2.05"/></svg>
<svg style="position:absolute;left:75.1px;top:170.9px;overflow:visible" width="24" height="24" viewBox="0 0 24 24"><path fill="#9AA7B0" fill-opacity=".8" d="M0 0 H7.3 Q8 0 8.5 .5 L10.6 2.7 H21.4 V16.6 H0z"/></svg>
<svg style="position:absolute;left:50.89999999999999px;top:172.3px;overflow:visible" width="10" height="14" viewBox="0 0 10 14"><path d="M1 0.8 L7 6.8 L1 12.8" fill="none" stroke="#b2b4b6" stroke-width="2.05"/></svg>
<svg style="position:absolute;left:75.1px;top:200.9px;overflow:visible" width="24" height="24" viewBox="0 0 24 24"><path fill="#9AA7B0" fill-opacity=".8" d="M0 0 H7.3 Q8 0 8.5 .5 L10.6 2.7 H21.4 V16.6 H0z"/></svg>
<svg style="position:absolute;left:75.1px;top:230.9px;overflow:visible" width="24" height="24" viewBox="0 0 24 24"><path fill="#9AA7B0" fill-opacity=".8" d="M0 0 H7.3 Q8 0 8.5 .5 L10.6 2.7 H21.4 V16.6 H0z"/></svg>
<svg style="position:absolute;left:75.1px;top:260.9px;overflow:visible" width="24" height="24" viewBox="0 0 24 24"><path fill="#9AA7B0" fill-opacity=".8" d="M0 0 H7.3 Q8 0 8.5 .5 L10.6 2.7 H21.4 V16.6 H0z"/></svg>
<svg style="position:absolute;left:50.89999999999999px;top:262.3px;overflow:visible" width="10" height="14" viewBox="0 0 10 14"><path d="M1 0.8 L7 6.8 L1 12.8" fill="none" stroke="#b2b4b6" stroke-width="2.05"/></svg>
<svg style="position:absolute;left:75.1px;top:290.9px;overflow:visible" width="24" height="24" viewBox="0 0 24 24"><path fill="#9AA7B0" fill-opacity=".8" d="M0 0 H7.3 Q8 0 8.5 .5 L10.6 2.7 H21.4 V16.6 H0z"/></svg>
<svg style="position:absolute;left:50.89999999999999px;top:292.3px;overflow:visible" width="10" height="14" viewBox="0 0 10 14"><path d="M1 0.8 L7 6.8 L1 12.8" fill="none" stroke="#b2b4b6" stroke-width="2.05"/></svg>
<svg style="position:absolute;left:75.1px;top:320.9px;overflow:visible" width="24" height="24" viewBox="0 0 24 24"><path fill="#9AA7B0" fill-opacity=".8" d="M0 0 H7.3 Q8 0 8.5 .5 L10.6 2.7 H21.4 V16.6 H0z"/></svg>
<svg style="position:absolute;left:48.49999999999999px;top:323.6px;overflow:visible" width="14" height="10" viewBox="0 0 14 10"><path d="M0.8 1 L6.8 7 L12.8 1" fill="none" stroke="#b2b4b6" stroke-width="1.9"/></svg>
<svg style="position:absolute;left:102.1px;top:350.9px;overflow:visible" width="24" height="24" viewBox="0 0 24 24"><path fill="#9AA7B0" fill-opacity=".8" d="M0 0 H7.3 Q8 0 8.5 .5 L10.6 2.7 H21.4 V16.6 H0z"/></svg>
<svg style="position:absolute;left:77.89999999999999px;top:352.3px;overflow:visible" width="10" height="14" viewBox="0 0 10 14"><path d="M1 0.8 L7 6.8 L1 12.8" fill="none" stroke="#b2b4b6" stroke-width="2.05"/></svg>
<svg style="position:absolute;left:105.1px;top:378.9px;overflow:visible" width="24" height="24" viewBox="0 0 24 24"><path fill="#9AA7B0" fill-opacity=".8" d="M6.7 0 L0 6.7 H6.7z"/><path fill="#9AA7B0" fill-opacity=".8" d="M7.8 0 H15.4 V8.3 H9.4 Q7.3 8.8 7.3 11.2 V13.4 L4.8 14.6 V17.8 L7.3 19 V21.4 H0 V7.9 H7.8z"/><g fill="none" stroke="#9AA7B0" stroke-width="1.9" stroke-linejoin="round" stroke-linecap="butt"><path d="M11.6 10.4 Q9.2 10.4 9.2 12.6 V14.4 Q9.2 16.1 6.6 16.3 Q9.2 16.5 9.2 18.2 V20 Q9.2 22.2 11.6 22.2"/><path d="M14.4 10.4 Q16.8 10.4 16.8 12.6 V14.4 Q16.8 16.1 19.4 16.3 Q16.8 16.5 16.8 18.2 V20 Q16.8 22.2 14.4 22.2"/></g><rect fill="#9AA7B0" fill-opacity=".8" x="11.8" y="12.5" width="2.4" height="7.6" rx="1.2"/></svg>
<svg style="position:absolute;left:105.1px;top:409.2px;overflow:visible" width="24" height="24" viewBox="0 0 24 24"><path fill="#9AA7B0" fill-opacity=".8" d="M6.7 0 L0 6.7 H6.7z"/><path fill="#9AA7B0" fill-opacity=".8" d="M7.8 0 H15.4 V21.4 H0 V7.9 H7.8z"/><g transform="translate(5.9 8.8) scale(0.5916666666666667)" opacity="1"><path fill="#3c3f41" stroke="#3c3f41" stroke-width="3.38" stroke-linejoin="round" paint-order="stroke" d="M14.25.18l.9.2.73.26.59.3.45.32.34.34.25.34.16.33.1.3.04.26.02.2-.01.13V8.5l-.05.63-.13.55-.21.46-.26.38-.3.31-.33.25-.35.19-.35.14-.33.1-.3.07-.26.04-.21.02H8.77l-.69.05-.59.14-.5.22-.41.27-.33.32-.27.35-.2.36-.15.37-.1.35-.07.32-.04.27-.02.21v3.06H3.17l-.21-.03-.28-.07-.32-.12-.35-.18-.36-.26-.36-.36-.35-.46-.32-.59-.28-.73-.21-.88-.14-1.05-.05-1.23.06-1.22.16-1.04.24-.87.32-.71.36-.57.4-.44.42-.33.42-.24.4-.16.36-.1.32-.05.24-.01h.16l.06.01h8.16v-.83H6.18l-.01-2.75-.02-.37.05-.34.11-.31.17-.28.25-.26.31-.23.38-.2.44-.18.51-.15.58-.12.64-.1.71-.06.77-.04.84-.02 1.27.05zM7.95 2.16l-.23.33-.08.41.08.41.23.34.33.22.41.09.41-.09.33-.22.23-.34.08-.41-.08-.41-.23-.33-.33-.22-.41-.09-.41.09z"/><path fill="#3c3f41" stroke="#3c3f41" stroke-width="3.38" stroke-linejoin="round" paint-order="stroke" d="M21.04 6.11l.28.06.32.12.35.18.36.27.36.35.35.47.32.59.28.73.21.88.14 1.04.05 1.23-.06 1.23-.16 1.04-.24.86-.32.71-.36.57-.4.45-.42.33-.42.24-.4.16-.36.09-.32.05-.24.02-.16-.01h-8.22v.82h5.84l.01 2.76.02.36-.05.34-.11.31-.17.29-.25.25-.31.24-.38.2-.44.17-.51.15-.58.13-.64.09-.71.07-.77.04-.84.01-1.27-.04-1.07-.14-.9-.2-.73-.25-.59-.3-.45-.33-.34-.34-.25-.34-.16-.33-.1-.3-.04-.25-.02-.2.01-.13v-5.34l.05-.64.13-.54.21-.46.26-.38.3-.32.33-.24.35-.2.35-.14.33-.1.3-.06.26-.04.21-.02.13-.01h5.84l.69-.05.59-.14.5-.21.41-.28.33-.32.27-.35.2-.36.15-.36.1-.35.07-.32.04-.28.02-.21V6.07h2.09l.14.01zM14.57 20.36l-.23.33-.08.41.08.41.23.33.33.23.41.08.41-.08.33-.23.23-.33.08-.41-.08-.41-.23-.33-.33-.23-.41-.08-.41.08z"/><path fill="#3d9bd5" fill-rule="evenodd" d="M14.25.18l.9.2.73.26.59.3.45.32.34.34.25.34.16.33.1.3.04.26.02.2-.01.13V8.5l-.05.63-.13.55-.21.46-.26.38-.3.31-.33.25-.35.19-.35.14-.33.1-.3.07-.26.04-.21.02H8.77l-.69.05-.59.14-.5.22-.41.27-.33.32-.27.35-.2.36-.15.37-.1.35-.07.32-.04.27-.02.21v3.06H3.17l-.21-.03-.28-.07-.32-.12-.35-.18-.36-.26-.36-.36-.35-.46-.32-.59-.28-.73-.21-.88-.14-1.05-.05-1.23.06-1.22.16-1.04.24-.87.32-.71.36-.57.4-.44.42-.33.42-.24.4-.16.36-.1.32-.05.24-.01h.16l.06.01h8.16v-.83H6.18l-.01-2.75-.02-.37.05-.34.11-.31.17-.28.25-.26.31-.23.38-.2.44-.18.51-.15.58-.12.64-.1.71-.06.77-.04.84-.02 1.27.05zM7.95 2.16l-.23.33-.08.41.08.41.23.34.33.22.41.09.41-.09.33-.22.23-.34.08-.41-.08-.41-.23-.33-.33-.22-.41-.09-.41.09z"/><path fill="#f5c211" fill-rule="evenodd" d="M21.04 6.11l.28.06.32.12.35.18.36.27.36.35.35.47.32.59.28.73.21.88.14 1.04.05 1.23-.06 1.23-.16 1.04-.24.86-.32.71-.36.57-.4.45-.42.33-.42.24-.4.16-.36.09-.32.05-.24.02-.16-.01h-8.22v.82h5.84l.01 2.76.02.36-.05.34-.11.31-.17.29-.25.25-.31.24-.38.2-.44.17-.51.15-.58.13-.64.09-.71.07-.77.04-.84.01-1.27-.04-1.07-.14-.9-.2-.73-.25-.59-.3-.45-.33-.34-.34-.25-.34-.16-.33-.1-.3-.04-.25-.02-.2.01-.13v-5.34l.05-.64.13-.54.21-.46.26-.38.3-.32.33-.24.35-.2.35-.14.33-.1.3-.06.26-.04.21-.02.13-.01h5.84l.69-.05.59-.14.5-.21.41-.28.33-.32.27-.35.2-.36.15-.36.1-.35.07-.32.04-.28.02-.21V6.07h2.09l.14.01zM14.57 20.36l-.23.33-.08.41.08.41.23.33.33.23.41.08.41-.08.33-.23.23-.33.08-.41-.08-.41-.23-.33-.33-.23-.41-.08-.41.08z"/></g></svg>
<svg style="position:absolute;left:105.1px;top:438.9px;overflow:visible" width="24" height="24" viewBox="0 0 24 24"><path fill="#9AA7B0" fill-opacity=".8" d="M6.7 0 L0 6.7 H6.7z"/><path fill="#9AA7B0" fill-opacity=".8" d="M7.8 0 H15.4 V8.3 H9.4 Q7.3 8.8 7.3 11.2 V13.4 L4.8 14.6 V17.8 L7.3 19 V21.4 H0 V7.9 H7.8z"/><g fill="none" stroke="#9AA7B0" stroke-width="1.9" stroke-linejoin="round" stroke-linecap="butt"><path d="M11.6 10.4 Q9.2 10.4 9.2 12.6 V14.4 Q9.2 16.1 6.6 16.3 Q9.2 16.5 9.2 18.2 V20 Q9.2 22.2 11.6 22.2"/><path d="M14.4 10.4 Q16.8 10.4 16.8 12.6 V14.4 Q16.8 16.1 19.4 16.3 Q16.8 16.5 16.8 18.2 V20 Q16.8 22.2 14.4 22.2"/></g><rect fill="#9AA7B0" fill-opacity=".8" x="11.8" y="12.5" width="2.4" height="7.6" rx="1.2"/></svg>
<svg style="position:absolute;left:105.1px;top:469.2px;overflow:visible" width="24" height="24" viewBox="0 0 24 24"><path fill="#9AA7B0" fill-opacity=".8" d="M6.7 0 L0 6.7 H6.7z"/><path fill="#9AA7B0" fill-opacity=".8" d="M7.8 0 H15.4 V21.4 H0 V7.9 H7.8z"/><g transform="translate(5.9 8.8) scale(0.5916666666666667)" opacity="1"><path fill="#3c3f41" stroke="#3c3f41" stroke-width="3.38" stroke-linejoin="round" paint-order="stroke" d="M14.25.18l.9.2.73.26.59.3.45.32.34.34.25.34.16.33.1.3.04.26.02.2-.01.13V8.5l-.05.63-.13.55-.21.46-.26.38-.3.31-.33.25-.35.19-.35.14-.33.1-.3.07-.26.04-.21.02H8.77l-.69.05-.59.14-.5.22-.41.27-.33.32-.27.35-.2.36-.15.37-.1.35-.07.32-.04.27-.02.21v3.06H3.17l-.21-.03-.28-.07-.32-.12-.35-.18-.36-.26-.36-.36-.35-.46-.32-.59-.28-.73-.21-.88-.14-1.05-.05-1.23.06-1.22.16-1.04.24-.87.32-.71.36-.57.4-.44.42-.33.42-.24.4-.16.36-.1.32-.05.24-.01h.16l.06.01h8.16v-.83H6.18l-.01-2.75-.02-.37.05-.34.11-.31.17-.28.25-.26.31-.23.38-.2.44-.18.51-.15.58-.12.64-.1.71-.06.77-.04.84-.02 1.27.05zM7.95 2.16l-.23.33-.08.41.08.41.23.34.33.22.41.09.41-.09.33-.22.23-.34.08-.41-.08-.41-.23-.33-.33-.22-.41-.09-.41.09z"/><path fill="#3c3f41" stroke="#3c3f41" stroke-width="3.38" stroke-linejoin="round" paint-order="stroke" d="M21.04 6.11l.28.06.32.12.35.18.36.27.36.35.35.47.32.59.28.73.21.88.14 1.04.05 1.23-.06 1.23-.16 1.04-.24.86-.32.71-.36.57-.4.45-.42.33-.42.24-.4.16-.36.09-.32.05-.24.02-.16-.01h-8.22v.82h5.84l.01 2.76.02.36-.05.34-.11.31-.17.29-.25.25-.31.24-.38.2-.44.17-.51.15-.58.13-.64.09-.71.07-.77.04-.84.01-1.27-.04-1.07-.14-.9-.2-.73-.25-.59-.3-.45-.33-.34-.34-.25-.34-.16-.33-.1-.3-.04-.25-.02-.2.01-.13v-5.34l.05-.64.13-.54.21-.46.26-.38.3-.32.33-.24.35-.2.35-.14.33-.1.3-.06.26-.04.21-.02.13-.01h5.84l.69-.05.59-.14.5-.21.41-.28.33-.32.27-.35.2-.36.15-.36.1-.35.07-.32.04-.28.02-.21V6.07h2.09l.14.01zM14.57 20.36l-.23.33-.08.41.08.41.23.33.33.23.41.08.41-.08.33-.23.23-.33.08-.41-.08-.41-.23-.33-.33-.23-.41-.08-.41.08z"/><path fill="#3d9bd5" fill-rule="evenodd" d="M14.25.18l.9.2.73.26.59.3.45.32.34.34.25.34.16.33.1.3.04.26.02.2-.01.13V8.5l-.05.63-.13.55-.21.46-.26.38-.3.31-.33.25-.35.19-.35.14-.33.1-.3.07-.26.04-.21.02H8.77l-.69.05-.59.14-.5.22-.41.27-.33.32-.27.35-.2.36-.15.37-.1.35-.07.32-.04.27-.02.21v3.06H3.17l-.21-.03-.28-.07-.32-.12-.35-.18-.36-.26-.36-.36-.35-.46-.32-.59-.28-.73-.21-.88-.14-1.05-.05-1.23.06-1.22.16-1.04.24-.87.32-.71.36-.57.4-.44.42-.33.42-.24.4-.16.36-.1.32-.05.24-.01h.16l.06.01h8.16v-.83H6.18l-.01-2.75-.02-.37.05-.34.11-.31.17-.28.25-.26.31-.23.38-.2.44-.18.51-.15.58-.12.64-.1.71-.06.77-.04.84-.02 1.27.05zM7.95 2.16l-.23.33-.08.41.08.41.23.34.33.22.41.09.41-.09.33-.22.23-.34.08-.41-.08-.41-.23-.33-.33-.22-.41-.09-.41.09z"/><path fill="#f5c211" fill-rule="evenodd" d="M21.04 6.11l.28.06.32.12.35.18.36.27.36.35.35.47.32.59.28.73.21.88.14 1.04.05 1.23-.06 1.23-.16 1.04-.24.86-.32.71-.36.57-.4.45-.42.33-.42.24-.4.16-.36.09-.32.05-.24.02-.16-.01h-8.22v.82h5.84l.01 2.76.02.36-.05.34-.11.31-.17.29-.25.25-.31.24-.38.2-.44.17-.51.15-.58.13-.64.09-.71.07-.77.04-.84.01-1.27-.04-1.07-.14-.9-.2-.73-.25-.59-.3-.45-.33-.34-.34-.25-.34-.16-.33-.1-.3-.04-.25-.02-.2.01-.13v-5.34l.05-.64.13-.54.21-.46.26-.38.3-.32.33-.24.35-.2.35-.14.33-.1.3-.06.26-.04.21-.02.13-.01h5.84l.69-.05.59-.14.5-.21.41-.28.33-.32.27-.35.2-.36.15-.36.1-.35.07-.32.04-.28.02-.21V6.07h2.09l.14.01zM14.57 20.36l-.23.33-.08.41.08.41.23.33.33.23.41.08.41-.08.33-.23.23-.33.08-.41-.08-.41-.23-.33-.33-.23-.41-.08-.41.08z"/></g></svg>
<svg style="position:absolute;left:105.1px;top:498.9px;overflow:visible" width="24" height="24" viewBox="0 0 24 24"><path fill="#9AA7B0" fill-opacity=".8" d="M6.7 0 L0 6.7 H6.7z"/><path fill="#9AA7B0" fill-opacity=".8" d="M7.8 0 H15.4 V8.3 H9.4 Q7.3 8.8 7.3 11.2 V13.4 L4.8 14.6 V17.8 L7.3 19 V21.4 H0 V7.9 H7.8z"/><g fill="none" stroke="#9AA7B0" stroke-width="1.9" stroke-linejoin="round" stroke-linecap="butt"><path d="M11.6 10.4 Q9.2 10.4 9.2 12.6 V14.4 Q9.2 16.1 6.6 16.3 Q9.2 16.5 9.2 18.2 V20 Q9.2 22.2 11.6 22.2"/><path d="M14.4 10.4 Q16.8 10.4 16.8 12.6 V14.4 Q16.8 16.1 19.4 16.3 Q16.8 16.5 16.8 18.2 V20 Q16.8 22.2 14.4 22.2"/></g><rect fill="#9AA7B0" fill-opacity=".8" x="11.8" y="12.5" width="2.4" height="7.6" rx="1.2"/></svg>
<svg style="position:absolute;left:105.1px;top:529.2px;overflow:visible" width="24" height="24" viewBox="0 0 24 24"><path fill="#9AA7B0" fill-opacity=".8" d="M6.7 0 L0 6.7 H6.7z"/><path fill="#9AA7B0" fill-opacity=".8" d="M7.8 0 H15.4 V21.4 H0 V7.9 H7.8z"/><g transform="translate(5.9 8.8) scale(0.5916666666666667)" opacity="1"><path fill="#3c3f41" stroke="#3c3f41" stroke-width="3.38" stroke-linejoin="round" paint-order="stroke" d="M14.25.18l.9.2.73.26.59.3.45.32.34.34.25.34.16.33.1.3.04.26.02.2-.01.13V8.5l-.05.63-.13.55-.21.46-.26.38-.3.31-.33.25-.35.19-.35.14-.33.1-.3.07-.26.04-.21.02H8.77l-.69.05-.59.14-.5.22-.41.27-.33.32-.27.35-.2.36-.15.37-.1.35-.07.32-.04.27-.02.21v3.06H3.17l-.21-.03-.28-.07-.32-.12-.35-.18-.36-.26-.36-.36-.35-.46-.32-.59-.28-.73-.21-.88-.14-1.05-.05-1.23.06-1.22.16-1.04.24-.87.32-.71.36-.57.4-.44.42-.33.42-.24.4-.16.36-.1.32-.05.24-.01h.16l.06.01h8.16v-.83H6.18l-.01-2.75-.02-.37.05-.34.11-.31.17-.28.25-.26.31-.23.38-.2.44-.18.51-.15.58-.12.64-.1.71-.06.77-.04.84-.02 1.27.05zM7.95 2.16l-.23.33-.08.41.08.41.23.34.33.22.41.09.41-.09.33-.22.23-.34.08-.41-.08-.41-.23-.33-.33-.22-.41-.09-.41.09z"/><path fill="#3c3f41" stroke="#3c3f41" stroke-width="3.38" stroke-linejoin="round" paint-order="stroke" d="M21.04 6.11l.28.06.32.12.35.18.36.27.36.35.35.47.32.59.28.73.21.88.14 1.04.05 1.23-.06 1.23-.16 1.04-.24.86-.32.71-.36.57-.4.45-.42.33-.42.24-.4.16-.36.09-.32.05-.24.02-.16-.01h-8.22v.82h5.84l.01 2.76.02.36-.05.34-.11.31-.17.29-.25.25-.31.24-.38.2-.44.17-.51.15-.58.13-.64.09-.71.07-.77.04-.84.01-1.27-.04-1.07-.14-.9-.2-.73-.25-.59-.3-.45-.33-.34-.34-.25-.34-.16-.33-.1-.3-.04-.25-.02-.2.01-.13v-5.34l.05-.64.13-.54.21-.46.26-.38.3-.32.33-.24.35-.2.35-.14.33-.1.3-.06.26-.04.21-.02.13-.01h5.84l.69-.05.59-.14.5-.21.41-.28.33-.32.27-.35.2-.36.15-.36.1-.35.07-.32.04-.28.02-.21V6.07h2.09l.14.01zM14.57 20.36l-.23.33-.08.41.08.41.23.33.33.23.41.08.41-.08.33-.23.23-.33.08-.41-.08-.41-.23-.33-.33-.23-.41-.08-.41.08z"/><path fill="#3d9bd5" fill-rule="evenodd" d="M14.25.18l.9.2.73.26.59.3.45.32.34.34.25.34.16.33.1.3.04.26.02.2-.01.13V8.5l-.05.63-.13.55-.21.46-.26.38-.3.31-.33.25-.35.19-.35.14-.33.1-.3.07-.26.04-.21.02H8.77l-.69.05-.59.14-.5.22-.41.27-.33.32-.27.35-.2.36-.15.37-.1.35-.07.32-.04.27-.02.21v3.06H3.17l-.21-.03-.28-.07-.32-.12-.35-.18-.36-.26-.36-.36-.35-.46-.32-.59-.28-.73-.21-.88-.14-1.05-.05-1.23.06-1.22.16-1.04.24-.87.32-.71.36-.57.4-.44.42-.33.42-.24.4-.16.36-.1.32-.05.24-.01h.16l.06.01h8.16v-.83H6.18l-.01-2.75-.02-.37.05-.34.11-.31.17-.28.25-.26.31-.23.38-.2.44-.18.51-.15.58-.12.64-.1.71-.06.77-.04.84-.02 1.27.05zM7.95 2.16l-.23.33-.08.41.08.41.23.34.33.22.41.09.41-.09.33-.22.23-.34.08-.41-.08-.41-.23-.33-.33-.22-.41-.09-.41.09z"/><path fill="#f5c211" fill-rule="evenodd" d="M21.04 6.11l.28.06.32.12.35.18.36.27.36.35.35.47.32.59.28.73.21.88.14 1.04.05 1.23-.06 1.23-.16 1.04-.24.86-.32.71-.36.57-.4.45-.42.33-.42.24-.4.16-.36.09-.32.05-.24.02-.16-.01h-8.22v.82h5.84l.01 2.76.02.36-.05.34-.11.31-.17.29-.25.25-.31.24-.38.2-.44.17-.51.15-.58.13-.64.09-.71.07-.77.04-.84.01-1.27-.04-1.07-.14-.9-.2-.73-.25-.59-.3-.45-.33-.34-.34-.25-.34-.16-.33-.1-.3-.04-.25-.02-.2.01-.13v-5.34l.05-.64.13-.54.21-.46.26-.38.3-.32.33-.24.35-.2.35-.14.33-.1.3-.06.26-.04.21-.02.13-.01h5.84l.69-.05.59-.14.5-.21.41-.28.33-.32.27-.35.2-.36.15-.36.1-.35.07-.32.04-.28.02-.21V6.07h2.09l.14.01zM14.57 20.36l-.23.33-.08.41.08.41.23.33.33.23.41.08.41-.08.33-.23.23-.33.08-.41-.08-.41-.23-.33-.33-.23-.41-.08-.41.08z"/></g></svg>
<svg style="position:absolute;left:105.1px;top:558.9px;overflow:visible" width="24" height="24" viewBox="0 0 24 24"><path fill="#9AA7B0" fill-opacity=".8" d="M6.7 0 L0 6.7 H6.7z"/><path fill="#9AA7B0" fill-opacity=".8" d="M7.8 0 H15.4 V8.3 H9.4 Q7.3 8.8 7.3 11.2 V13.4 L4.8 14.6 V17.8 L7.3 19 V21.4 H0 V7.9 H7.8z"/><g fill="none" stroke="#9AA7B0" stroke-width="1.9" stroke-linejoin="round" stroke-linecap="butt"><path d="M11.6 10.4 Q9.2 10.4 9.2 12.6 V14.4 Q9.2 16.1 6.6 16.3 Q9.2 16.5 9.2 18.2 V20 Q9.2 22.2 11.6 22.2"/><path d="M14.4 10.4 Q16.8 10.4 16.8 12.6 V14.4 Q16.8 16.1 19.4 16.3 Q16.8 16.5 16.8 18.2 V20 Q16.8 22.2 14.4 22.2"/></g><rect fill="#9AA7B0" fill-opacity=".8" x="11.8" y="12.5" width="2.4" height="7.6" rx="1.2"/></svg>
<svg style="position:absolute;left:105.1px;top:589.2px;overflow:visible" width="24" height="24" viewBox="0 0 24 24"><path fill="#9AA7B0" fill-opacity=".8" d="M6.7 0 L0 6.7 H6.7z"/><path fill="#9AA7B0" fill-opacity=".8" d="M7.8 0 H15.4 V21.4 H0 V7.9 H7.8z"/><g transform="translate(5.9 8.8) scale(0.5916666666666667)" opacity="1"><path fill="#3c3f41" stroke="#3c3f41" stroke-width="3.38" stroke-linejoin="round" paint-order="stroke" d="M14.25.18l.9.2.73.26.59.3.45.32.34.34.25.34.16.33.1.3.04.26.02.2-.01.13V8.5l-.05.63-.13.55-.21.46-.26.38-.3.31-.33.25-.35.19-.35.14-.33.1-.3.07-.26.04-.21.02H8.77l-.69.05-.59.14-.5.22-.41.27-.33.32-.27.35-.2.36-.15.37-.1.35-.07.32-.04.27-.02.21v3.06H3.17l-.21-.03-.28-.07-.32-.12-.35-.18-.36-.26-.36-.36-.35-.46-.32-.59-.28-.73-.21-.88-.14-1.05-.05-1.23.06-1.22.16-1.04.24-.87.32-.71.36-.57.4-.44.42-.33.42-.24.4-.16.36-.1.32-.05.24-.01h.16l.06.01h8.16v-.83H6.18l-.01-2.75-.02-.37.05-.34.11-.31.17-.28.25-.26.31-.23.38-.2.44-.18.51-.15.58-.12.64-.1.71-.06.77-.04.84-.02 1.27.05zM7.95 2.16l-.23.33-.08.41.08.41.23.34.33.22.41.09.41-.09.33-.22.23-.34.08-.41-.08-.41-.23-.33-.33-.22-.41-.09-.41.09z"/><path fill="#3c3f41" stroke="#3c3f41" stroke-width="3.38" stroke-linejoin="round" paint-order="stroke" d="M21.04 6.11l.28.06.32.12.35.18.36.27.36.35.35.47.32.59.28.73.21.88.14 1.04.05 1.23-.06 1.23-.16 1.04-.24.86-.32.71-.36.57-.4.45-.42.33-.42.24-.4.16-.36.09-.32.05-.24.02-.16-.01h-8.22v.82h5.84l.01 2.76.02.36-.05.34-.11.31-.17.29-.25.25-.31.24-.38.2-.44.17-.51.15-.58.13-.64.09-.71.07-.77.04-.84.01-1.27-.04-1.07-.14-.9-.2-.73-.25-.59-.3-.45-.33-.34-.34-.25-.34-.16-.33-.1-.3-.04-.25-.02-.2.01-.13v-5.34l.05-.64.13-.54.21-.46.26-.38.3-.32.33-.24.35-.2.35-.14.33-.1.3-.06.26-.04.21-.02.13-.01h5.84l.69-.05.59-.14.5-.21.41-.28.33-.32.27-.35.2-.36.15-.36.1-.35.07-.32.04-.28.02-.21V6.07h2.09l.14.01zM14.57 20.36l-.23.33-.08.41.08.41.23.33.33.23.41.08.41-.08.33-.23.23-.33.08-.41-.08-.41-.23-.33-.33-.23-.41-.08-.41.08z"/><path fill="#3d9bd5" fill-rule="evenodd" d="M14.25.18l.9.2.73.26.59.3.45.32.34.34.25.34.16.33.1.3.04.26.02.2-.01.13V8.5l-.05.63-.13.55-.21.46-.26.38-.3.31-.33.25-.35.19-.35.14-.33.1-.3.07-.26.04-.21.02H8.77l-.69.05-.59.14-.5.22-.41.27-.33.32-.27.35-.2.36-.15.37-.1.35-.07.32-.04.27-.02.21v3.06H3.17l-.21-.03-.28-.07-.32-.12-.35-.18-.36-.26-.36-.36-.35-.46-.32-.59-.28-.73-.21-.88-.14-1.05-.05-1.23.06-1.22.16-1.04.24-.87.32-.71.36-.57.4-.44.42-.33.42-.24.4-.16.36-.1.32-.05.24-.01h.16l.06.01h8.16v-.83H6.18l-.01-2.75-.02-.37.05-.34.11-.31.17-.28.25-.26.31-.23.38-.2.44-.18.51-.15.58-.12.64-.1.71-.06.77-.04.84-.02 1.27.05zM7.95 2.16l-.23.33-.08.41.08.41.23.34.33.22.41.09.41-.09.33-.22.23-.34.08-.41-.08-.41-.23-.33-.33-.22-.41-.09-.41.09z"/><path fill="#f5c211" fill-rule="evenodd" d="M21.04 6.11l.28.06.32.12.35.18.36.27.36.35.35.47.32.59.28.73.21.88.14 1.04.05 1.23-.06 1.23-.16 1.04-.24.86-.32.71-.36.57-.4.45-.42.33-.42.24-.4.16-.36.09-.32.05-.24.02-.16-.01h-8.22v.82h5.84l.01 2.76.02.36-.05.34-.11.31-.17.29-.25.25-.31.24-.38.2-.44.17-.51.15-.58.13-.64.09-.71.07-.77.04-.84.01-1.27-.04-1.07-.14-.9-.2-.73-.25-.59-.3-.45-.33-.34-.34-.25-.34-.16-.33-.1-.3-.04-.25-.02-.2.01-.13v-5.34l.05-.64.13-.54.21-.46.26-.38.3-.32.33-.24.35-.2.35-.14.33-.1.3-.06.26-.04.21-.02.13-.01h5.84l.69-.05.59-.14.5-.21.41-.28.33-.32.27-.35.2-.36.15-.36.1-.35.07-.32.04-.28.02-.21V6.07h2.09l.14.01zM14.57 20.36l-.23.33-.08.41.08.41.23.33.33.23.41.08.41-.08.33-.23.23-.33.08-.41-.08-.41-.23-.33-.33-.23-.41-.08-.41.08z"/></g></svg>
<svg style="position:absolute;left:75.1px;top:620.9px;overflow:visible" width="24" height="24" viewBox="0 0 24 24"><path fill="#9AA7B0" fill-opacity=".8" d="M0 0 H7.3 Q8 0 8.5 .5 L10.6 2.7 H21.4 V16.6 H0z"/></svg>
<svg style="position:absolute;left:50.89999999999999px;top:622.3px;overflow:visible" width="10" height="14" viewBox="0 0 10 14"><path d="M1 0.8 L7 6.8 L1 12.8" fill="none" stroke="#b2b4b6" stroke-width="2.05"/></svg>
<div class="code" style="top:107.63px"><span style="color:#cc7832">from</span><span style="color:#a9b7c6"> setuptools </span><span style="color:#cc7832">import</span><span style="color:#a9b7c6"> setup</span></div>
<div class="ln" style="top:107.63px;color:#606366">1</div>
<div class="code" style="top:154.13px"></div>
<div class="ln" style="top:154.13px;color:#606366">2</div>
<div class="code" style="top:200.63px"><span style="color:#a9b7c6">setup(</span></div>
<div class="ln" style="top:200.63px;color:#606366">3</div>
<div class="code" style="top:247.13px"><span style="color:#a9b7c6">    </span><span style="color:#aa4926">name</span><span style="color:#a9b7c6">=</span><span style="color:#6a8759">&#x27;HMOS_test&#x27;</span><span style="color:#cc7832">,</span></div>
<div class="ln" style="top:247.13px;color:#a4a3a3">4</div>
<div class="code" style="top:293.63px"><span style="color:#a9b7c6">    </span><span style="color:#aa4926">version</span><span style="color:#a9b7c6">=</span><span style="color:#6a8759">&#x27;1.0&#x27;</span><span style="color:#cc7832">,</span></div>
<div class="ln" style="top:293.63px;color:#606366">5</div>
<div class="code" style="top:340.13px"><span style="color:#a9b7c6">    </span><span style="color:#aa4926">author</span><span style="color:#a9b7c6">=</span><span style="color:#6a8759">&#x27;tester&#x27;</span><span style="color:#cc7832">,</span></div>
<div class="ln" style="top:340.13px;color:#606366">6</div>
<div class="code" style="top:386.63px"><span style="color:#a9b7c6">    </span><span style="color:#aa4926">py_modules</span><span style="color:#a9b7c6">=[</span><span style="color:#6a8759">&#x27;testcases.TC_002&#x27;</span><span style="color:#a9b7c6">]</span><span style="color:#cc7832">,</span></div>
<div class="ln" style="top:386.63px;color:#606366">7</div>
<div class="code" style="top:433.13px"><span style="color:#a9b7c6">    </span><span style="color:#aa4926">include_package_data</span><span style="color:#a9b7c6">=</span><span style="color:#cc7832">True</span></div>
<div class="ln" style="top:433.13px;color:#606366">8</div>
<div class="code" style="top:479.63px"><span style="color:#a9b7c6">)</span></div>
<div class="ln" style="top:479.63px;color:#606366">9</div>
<div class="code" style="top:526.13px"></div>
<div class="ln" style="top:526.13px;color:#606366">10</div>
<svg style="position:absolute;left:540px;top:251px;overflow:visible" width="16" height="23" viewBox="0 0 16 23"><path fill="#f0a732" d="M7.9 0 A7.8 7.8 0 0 1 15.7 7.8 Q15.7 10.8 12.9 13.4 V15.8 H2.9 V13.4 Q0.1 10.8 0.1 7.8 A7.8 7.8 0 0 1 7.9 0z"/><rect x="3" y="17" width="9.8" height="1.6" fill="#9b9d9e"/><rect x="4" y="19.9" width="7.8" height="1.6" rx=".8" fill="#9b9d9e"/></svg>
<div class="t" style="left:45.00px;top:-11.65px;color:#bbbbbb;letter-spacing:-0.167px;"><span class="u">F</span>ile</div>
<div class="t" style="left:95.00px;top:-11.65px;color:#bbbbbb;letter-spacing:0.083px;"><span class="u">E</span>dit</div>
<div class="t" style="left:147.00px;top:-11.65px;color:#bbbbbb;letter-spacing:-0.500px;"><span class="u">V</span>iew</div>
<div class="t" style="left:206.00px;top:-11.65px;color:#bbbbbb;letter-spacing:0.107px;"><span class="u">N</span>avigate</div>
<div class="t" style="left:302.50px;top:-11.65px;color:#bbbbbb;letter-spacing:-0.083px;"><span class="u">C</span>ode</div>
<div class="t" style="left:368.00px;top:-11.65px;color:#bbbbbb;letter-spacing:-0.393px;"><span class="u">R</span>efactor</div>
<div class="t" style="left:459.25px;top:-11.65px;color:#bbbbbb;letter-spacing:-0.375px;">R<span class="u">u</span>n</div>
<div class="t" style="left:512.00px;top:-11.65px;color:#bbbbbb;letter-spacing:0.062px;"><span class="u">T</span>ools</div>
<div class="t" style="left:578.75px;top:-11.65px;color:#bbbbbb;letter-spacing:-3.625px;">VC<span class="u">S</span></div>
<div class="t" style="left:629.50px;top:-11.65px;color:#bbbbbb;letter-spacing:0.050px;"><span class="u">W</span>indow</div>
<div class="t" style="left:717.00px;top:-11.65px;color:#bbbbbb;letter-spacing:0.583px;"><span class="u">H</span>elp</div>
<div class="t" style="left:775.50px;top:-11.65px;color:#bbbbbb;letter-spacing:-0.037px;">DevEco Testing Hypium</div>
<div class="t" style="left:1027.75px;top:-13.65px;color:#8c8e90;letter-spacing:-0.042px;">QinWuYuan - setup-regression.py</div>
<div class="t" style="left:-4.95px;top:29.95px;color:#bbbbbb;letter-spacing:0.125px;font-weight:bold;">QinWuYuan</div>
<div class="t" style="left:154.20px;top:29.85px;color:#bbbbbb;letter-spacing:-0.053px;">setup-regression.py</div>
<div class="t" style="left:1516.15px;top:29.85px;color:#bbbbbb;letter-spacing:-0.100px;">user_login</div>
<div class="t" style="left:58.50px;top:72.95px;color:#bbbbbb;letter-spacing:0.000px;">Project</div>
<div class="t" style="left:444.55px;top:72.85px;color:#bbbbbb;letter-spacing:-0.162px;">user_login.py</div>
<div class="t" style="left:634.00px;top:72.85px;color:#bbbbbb;letter-spacing:-0.806px;">TC_002.py</div>
<div class="t" style="left:798.50px;top:72.85px;color:#bbbbbb;letter-spacing:0.064px;">Utils.py</div>
<div class="t" style="left:938.10px;top:72.85px;color:#bbbbbb;letter-spacing:-0.033px;">setup-regression.py</div>
<div class="t" style="left:1183.80px;top:72.85px;color:#bbbbbb;letter-spacing:-0.400px;">MANIFEST.ini</div>
<div class="t" style="left:75.25px;top:108.95px;color:#bbbbbb;letter-spacing:0.125px;font-weight:bold;">QinWuYuan</div>
<div class="t" style="left:102.55px;top:138.95px;color:#bbbbbb;letter-spacing:-1.050px;">aw</div>
<div class="t" style="left:102.55px;top:168.95px;color:#bbbbbb;letter-spacing:0.580px;">config</div>
<div class="t" style="left:102.55px;top:198.95px;color:#bbbbbb;letter-spacing:0.733px;">dist</div>
<div class="t" style="left:102.05px;top:228.95px;color:#bbbbbb;letter-spacing:0.950px;">hypium</div>
<div class="t" style="left:102.05px;top:258.95px;color:#bbbbbb;letter-spacing:0.475px;">reports</div>
<div class="t" style="left:102.05px;top:288.95px;color:#bbbbbb;letter-spacing:-0.193px;">resource</div>
<div class="t" style="left:103.05px;top:318.95px;color:#bbbbbb;letter-spacing:-0.662px;">testcases</div>
<div class="t" style="left:129.35px;top:348.95px;color:#bbbbbb;letter-spacing:-0.122px;">user_login</div>
<div class="t" style="left:129.50px;top:378.95px;color:#bbbbbb;letter-spacing:-0.775px;">TC_002.json</div>
<div class="t" style="left:129.50px;top:408.95px;color:#bbbbbb;letter-spacing:-0.794px;">TC_002.py</div>
<div class="t" style="left:129.50px;top:438.95px;color:#bbbbbb;letter-spacing:-0.775px;">TC_003.json</div>
<div class="t" style="left:129.50px;top:468.95px;color:#bbbbbb;letter-spacing:-0.794px;">TC_003.py</div>
<div class="t" style="left:129.50px;top:498.95px;color:#bbbbbb;letter-spacing:-0.775px;">TC_004.json</div>
<div class="t" style="left:129.50px;top:528.95px;color:#bbbbbb;letter-spacing:-0.794px;">TC_004.py</div>
<div class="t" style="left:129.50px;top:558.95px;color:#bbbbbb;letter-spacing:-0.775px;">TC_005.json</div>
<div class="t" style="left:129.50px;top:588.95px;color:#bbbbbb;letter-spacing:-0.794px;">TC_005.py</div>
<div class="t" style="left:103.05px;top:618.95px;color:#bbbbbb;letter-spacing:0.472px;">tmp_hypium</div>
<div class="t" style="left:194.00px;top:108.95px;color:#87898b;letter-spacing:0.053px;">D:\Project\QinWuYuan</div>
</div>
</body></html>
